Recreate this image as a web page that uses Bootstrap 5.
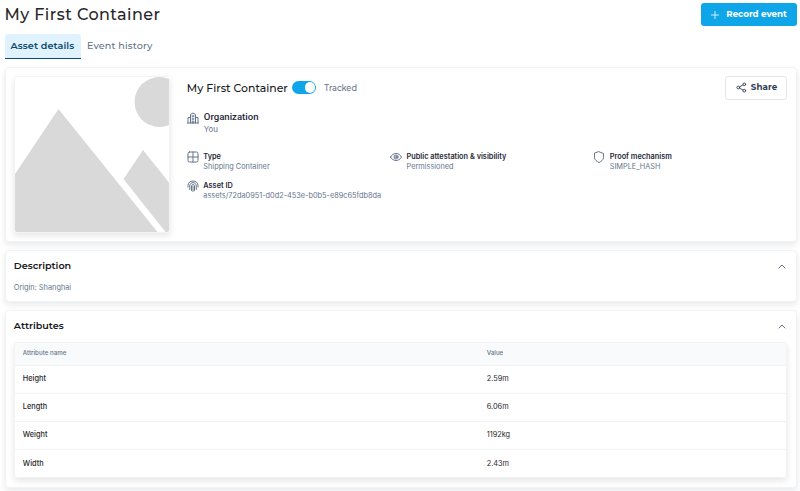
<!DOCTYPE html>
<html lang="en">
<head>
<meta charset="utf-8">
<meta name="viewport" content="width=device-width, initial-scale=1">
<title>My First Container</title>
<link href="https://cdn.jsdelivr.net/npm/bootstrap@5.3.0/dist/css/bootstrap.min.css" rel="stylesheet">
<style>
body{font-family:Inter,Roboto,sans-serif;font-size:7.35px;line-height:10px;color:#64748b;background:#fff;height:491px;overflow:hidden}
svg{display:block;flex:none}
.ico{fill:none;stroke:#64748b;stroke-width:2;stroke-linecap:round;stroke-linejoin:round}
.chev{stroke-width:1}
.page{padding:3px 3.5px 0 4.5px}
.page-title,.nav-link,.btn-record,.btn-share,.asset-name,.tracked,.section-title{font-family:Montserrat,Inter,sans-serif}
.page-title{font-size:16px;line-height:24px;font-weight:550;color:#27272a;letter-spacing:.42px}
.btn-record{background:#0ea5e9;color:#fff;width:96px;height:23px;border-radius:3px;font-size:8.7px;font-weight:700;gap:7px;padding:0 0 0 1px}
.btn-share{background:#fff;border:1px solid #e2e5ea;color:#334155;width:62px;height:24px;border-radius:3px;font-size:8.7px;font-weight:700;letter-spacing:.06px;padding:0 0 0 2px}
.tabs{margin-top:7px;height:24.5px}
.tabs .nav-link{font-size:9.6px;line-height:24px;font-weight:550;color:#64748b;padding:0 6px;letter-spacing:.14px;white-space:nowrap}
.tabs .nav-link.active{background:#e0f2fe;color:#0c4a6e;border-bottom:1.5px solid #0c4a6e;border-radius:4px 4px 0 0;font-weight:600;width:76.5px;letter-spacing:.1px;line-height:23px}
.panel{border:1px solid #f1f3f5;border-radius:4px;background:#fff;box-shadow:0 3px 6px rgba(15,23,42,.09);padding:0 9px 0 8.3px}
.panel-asset{height:175.5px;margin-top:8px;padding-top:8px}
.panel-desc{height:52px;margin-top:7.5px;padding-top:8.5px}
.panel-attr{height:178px;margin-top:8px;padding-top:8.5px}
.thumb{width:156px;height:157px;border:1px solid #f1f3f5;border-radius:3px;overflow:hidden;box-shadow:0 3px 6px rgba(15,23,42,.1)}
.asset-info{margin-left:17px;min-width:0}
.title-row{height:24px}
.asset-name{font-size:10.9px;line-height:16px;font-weight:550;color:#18181b;width:105.5px}
.switch{width:24px;height:12.5px;border-radius:7px;background:#0ea5e9;padding:1px}
.knob{width:10.5px;height:10.5px;border-radius:50%;background:#fff}
.tracked{font-size:8.2px;font-weight:550;margin-left:8px}
.label{font-weight:600;color:#1f2937;line-height:11px}
.org{margin-top:10px;height:25px;gap:5px}
.org>svg{margin-top:2px}
.org-label{font-family:Roboto,sans-serif;font-weight:500;font-size:9.6px;line-height:13px;color:#1f2937}
.org-value{font-size:7.9px;line-height:13px}
.facts{margin-top:16.5px;height:29px}
.facts>div{width:203.2px}
.facts>div:last-child{width:150px}
.fact{gap:4.5px}
.section-title{font-size:9.6px;font-weight:600;color:#18181b;line-height:14px}
.section-head{padding-right:1px}
.description{margin-top:9.7px}
.attr-table{border:1px solid #f1f3f5;border-radius:3px;box-shadow:0 3px 6px rgba(15,23,42,.1);height:135.5px;margin-top:9px;overflow:hidden}
.attr-table table{table-layout:fixed;font-size:7.35px}
.attr-table th,.attr-table td{padding:0 8px;vertical-align:middle;border-bottom:1px solid #f1f3f5;color:#27272a;height:28.2px}
.attr-table thead th{background:#f8fafc;color:#64748b;font-size:6.2px;font-weight:500;height:22px;padding-bottom:2px}
.attr-table tbody th{font-weight:500}
.attr-table tbody tr:last-child td,.attr-table tbody tr:last-child th{border-bottom:0}
</style>
<script src="https://cdn.jsdelivr.net/npm/bootstrap@5.3.0/dist/js/bootstrap.bundle.min.js"></script>
</head>
<body>
<main class="page">
  <header class="d-flex justify-content-between align-items-start">
    <h1 class="page-title m-0">My First Container</h1>
    <button class="btn btn-record d-flex align-items-center justify-content-center">
      <svg width="8" height="8" viewBox="0 0 8 8" stroke="#fff" stroke-width=".8"><path d="M4 0v8M0 4h8"/></svg>Record event</button>
  </header>
  <nav class="nav tabs flex-nowrap">
    <a class="nav-link active" href="#">Asset details</a>
    <a class="nav-link" href="#">Event history</a>
  </nav>

  <section class="panel panel-asset d-flex align-items-start">
    <div class="thumb flex-shrink-0">
      <svg width="154" height="155" viewBox="0 0 154 155" fill="#d9d9d9"><circle cx="144.5" cy="25" r="25"/><path d="M0 97 43.500 32 142.500 155H0zM108.500 102 128 73 154 105.500V155H150.500z"/></svg>
    </div>
    <div class="asset-info flex-grow-1">
      <div class="d-flex align-items-start title-row">
        <div class="d-flex align-items-center h-100">
          <h2 class="asset-name text-nowrap m-0">My First Container</h2>
          <span class="switch d-flex justify-content-end"><span class="knob"></span></span>
          <span class="tracked">Tracked</span>
        </div>
        <button class="btn btn-share ms-auto d-flex align-items-center justify-content-center gap-1">
          <svg class="ico" style="stroke:#334155" width="11" height="11" viewBox="0 0 24 24"><circle cx="18" cy="5" r="3"/><circle cx="5" cy="12" r="3"/><circle cx="18" cy="19" r="3"/><path d="M8 10.500 15 6.500M8 13.500l7 4"/></svg>Share</button>
      </div>
      <div class="d-flex org">
        <svg class="ico" width="12" height="12" viewBox="0 0 24 24"><path d="M1 22h22M7 22V5l5-3 5 3v17M7 11H2v11M17 11h5v11M10.500 7v3M13.500 7v3M10.500 13v2M13.500 13v2M10.500 18v4M13.500 18v4"/></svg>
        <div><div class="org-label">Organization</div><div class="org-value">You</div></div>
      </div>
      <div class="facts d-flex">
        <div class="fact d-flex"><svg class="ico" width="12" height="12" viewBox="0 0 24 24"><rect x="2" y="2" width="20" height="20" rx="3"/><path d="M12 2v20M2 12h20"/></svg><div><div class="label">Type</div><div>Shipping Container</div></div></div>
        <div class="fact d-flex"><svg class="ico" width="12" height="12" viewBox="0 0 24 24"><path d="M1 12C6 2.500 18 2.500 23 12 18 21.500 6 21.500 1 12z"/><circle cx="12" cy="12" r="4"/><circle cx="12" cy="12" r="1"/></svg><div><div class="label text-nowrap">Public attestation &amp; visibility</div><div>Permissioned</div></div></div>
        <div class="fact d-flex"><svg class="ico" width="12" height="12" viewBox="0 0 24 24"><path d="M12 1.500 21 5v8c0 5-5 8-9 10-4-2-9-5-9-10V5z"/></svg><div><div class="label text-nowrap">Proof mechanism</div><div>SIMPLE_HASH</div></div></div>
      </div>
      <div class="fact d-flex"><svg class="ico" width="12" height="12" viewBox="0 0 24 24"><path d="M2 14v-3C2-1 22-1 22 11v3M5.500 19v-7C5.500 3 18.500 3 18.500 12v7M9 21v-9c0-4 6-4 6 0v9M12 12v11"/></svg><div><div class="label">Asset ID</div><div>assets/72da0951-d0d2-453e-b0b5-e89c65fdb8da</div></div></div>
    </div>
  </section>

  <section class="panel panel-desc">
    <div class="section-head d-flex justify-content-between align-items-center"><h2 class="section-title m-0">Description</h2><svg class="ico chev" width="8" height="5" viewBox="0 0 8 5"><path d="M1 4 4 1l3 3"/></svg></div>
    <div class="description">Origin: Shanghai</div>
  </section>

  <section class="panel panel-attr">
    <div class="section-head d-flex justify-content-between align-items-center"><h2 class="section-title m-0">Attributes</h2><svg class="ico chev" width="8" height="5" viewBox="0 0 8 5"><path d="M1 4 4 1l3 3"/></svg></div>
    <div class="attr-table">
      <table class="w-100">
        <colgroup><col style="width:60.2%"><col></colgroup>
        <thead><tr><th>Attribute name</th><th>Value</th></tr></thead>
        <tbody>
          <tr><th>Height</th><td>2.59m</td></tr>
          <tr><th>Length</th><td>6.06m</td></tr>
          <tr><th>Weight</th><td>1192kg</td></tr>
          <tr><th>Width</th><td>2.43m</td></tr>
        </tbody>
      </table>
    </div>
  </section>
</main>
</body>
</html>
